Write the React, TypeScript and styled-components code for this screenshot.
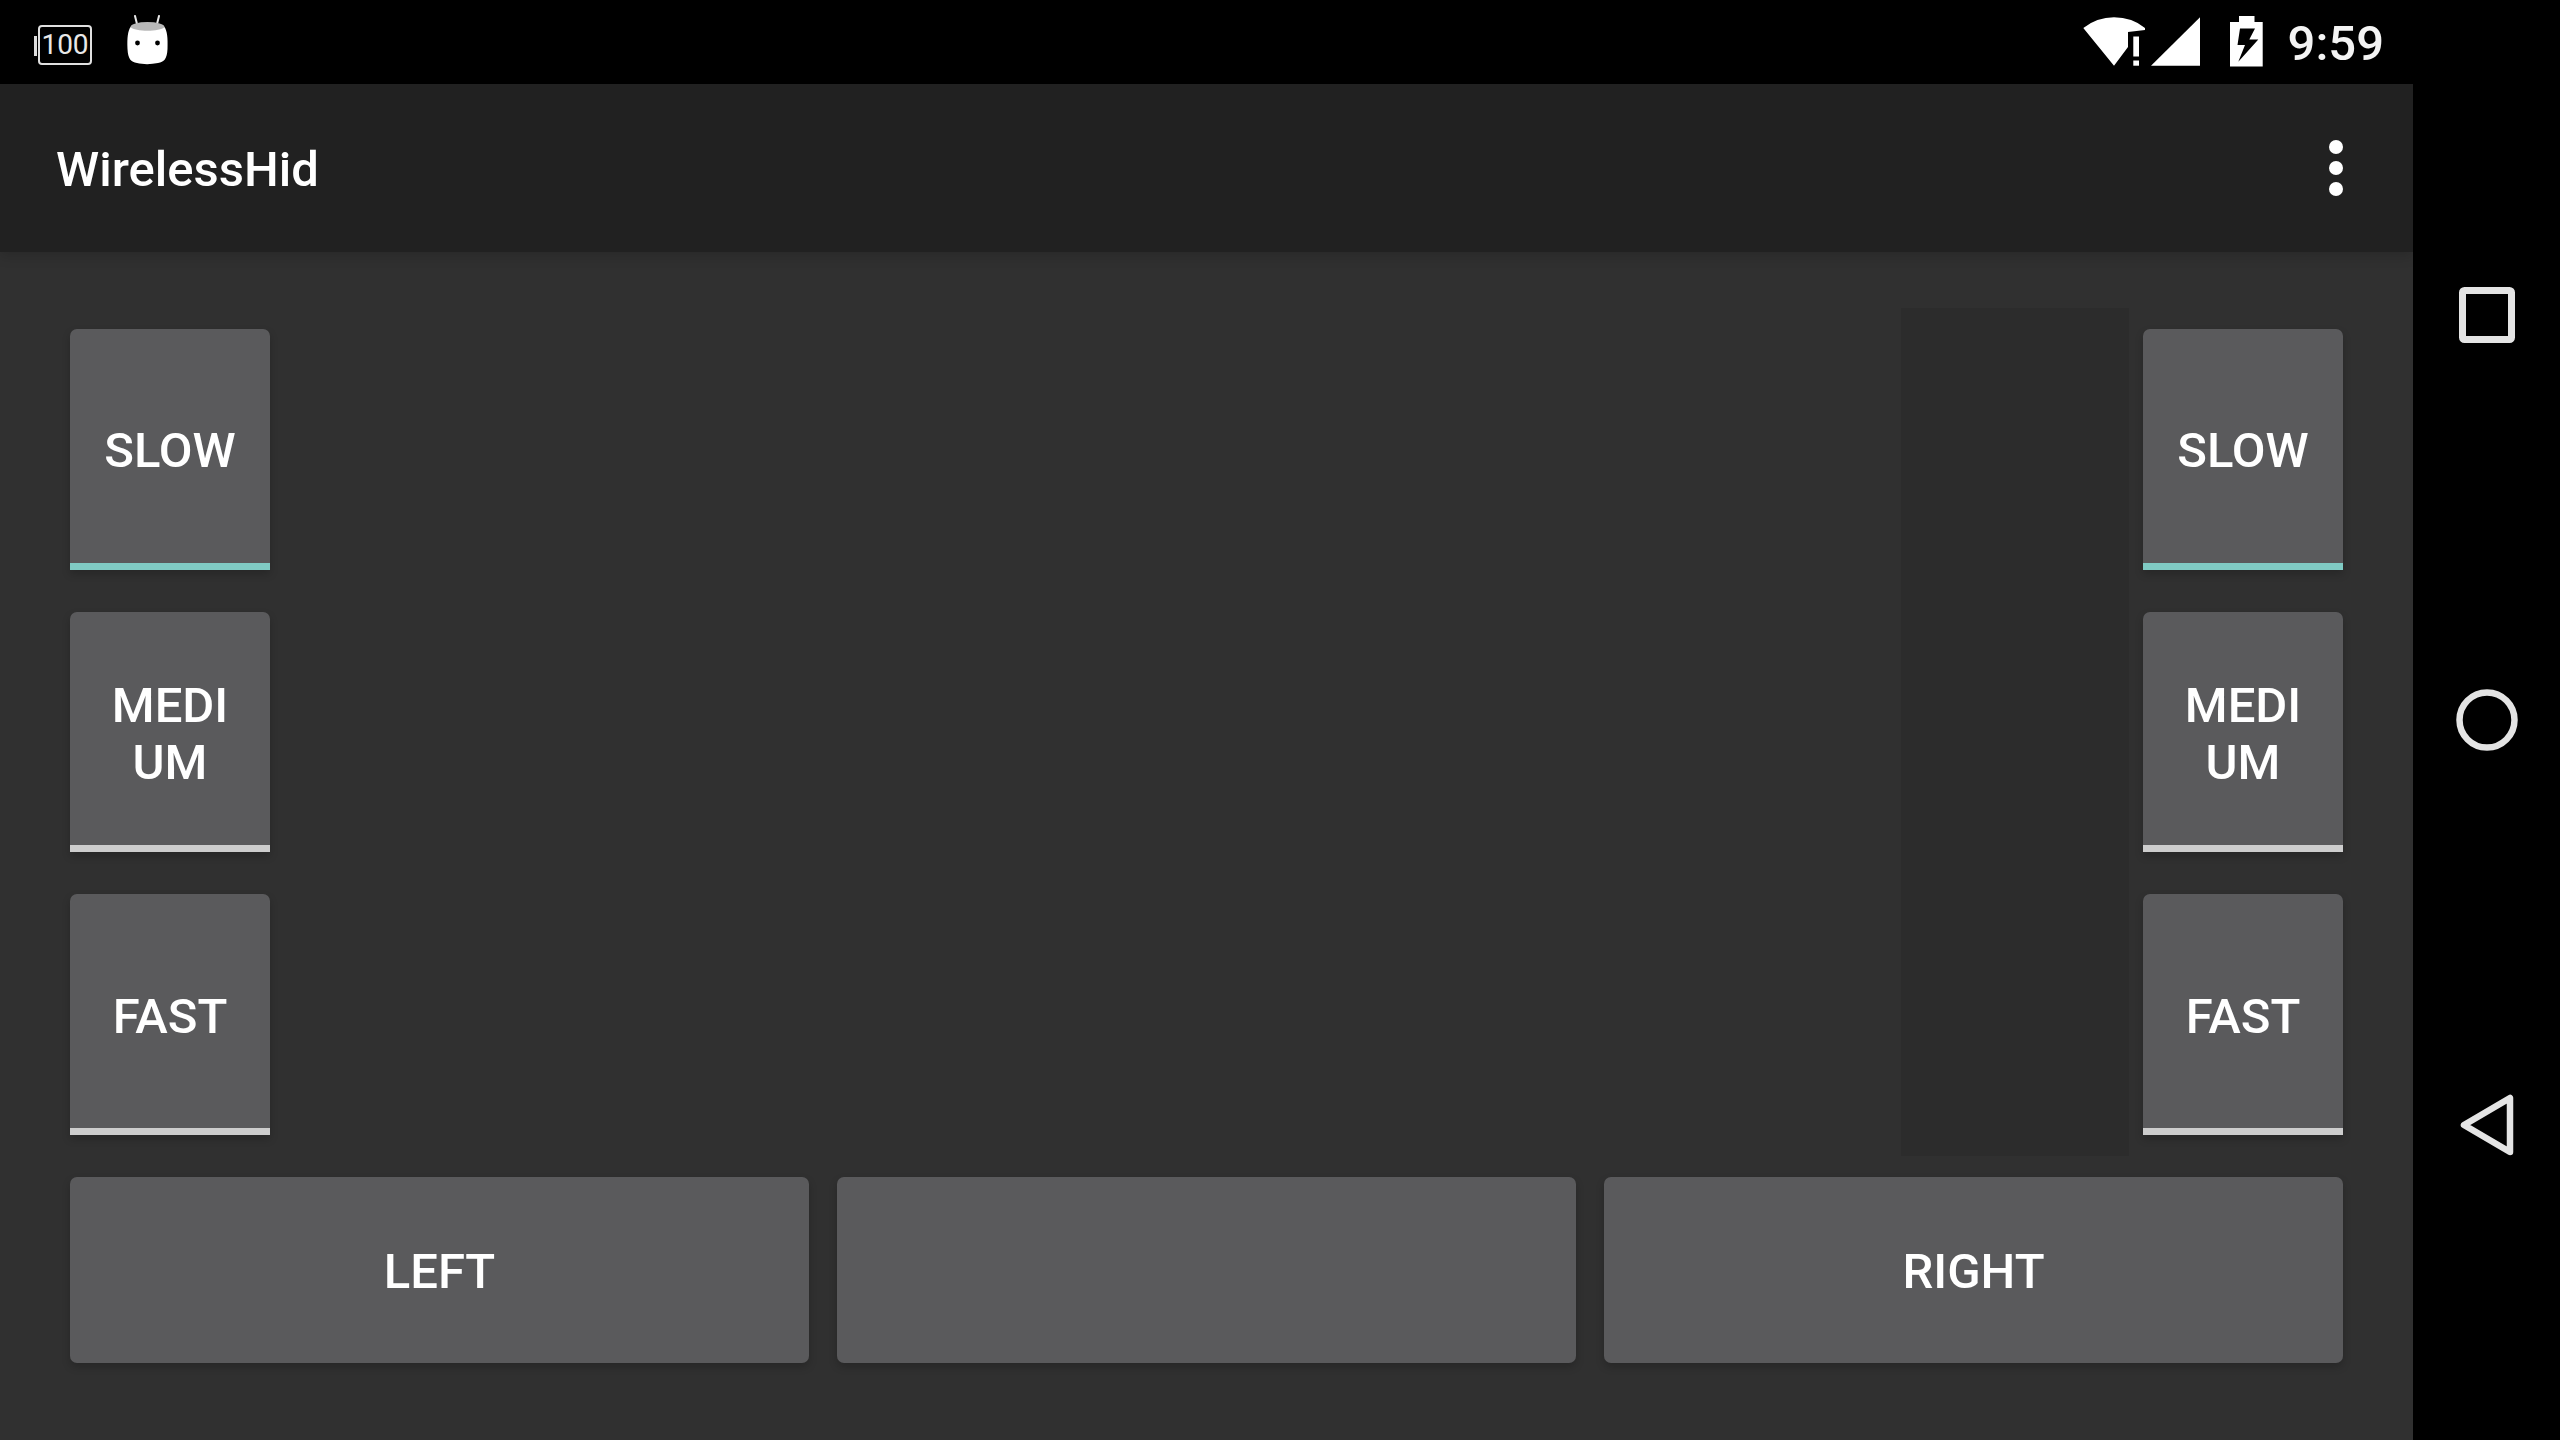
import React from 'react'
import styled, { createGlobalStyle } from 'styled-components'

const GlobalStyle = createGlobalStyle`
  html, body {
    margin: 0;
    background: #000;
  }
  * {
    box-sizing: border-box;
  }
`

export default function App () {
  return (
    <Screen>
      <GlobalStyle />
      <StatusBar>
        <LeftIcons>
          <BatteryHundred>100</BatteryHundred>
          <AndroidHead />
        </LeftIcons>
        <RightIcons>
          <WifiIcon />
          <SignalIcon />
          <ChargingIcon />
          <Clock>9:59</Clock>
        </RightIcons>
      </StatusBar>
      <Body>
        <Main>
          <AppBar>
            <Title>WirelessHid</Title>
            <OverflowIcon />
          </AppBar>
          <Content>
            <TopArea>
              <SpeedColumn>
                <SpeedButton $active>SLOW</SpeedButton>
                <SpeedButton>MEDIUM</SpeedButton>
                <SpeedButton>FAST</SpeedButton>
              </SpeedColumn>
              <Spacer />
              <ScrollPanel />
              <SpeedColumn>
                <SpeedButton $active>SLOW</SpeedButton>
                <SpeedButton>MEDIUM</SpeedButton>
                <SpeedButton>FAST</SpeedButton>
              </SpeedColumn>
            </TopArea>
            <MouseRow>
              <MouseButton>LEFT</MouseButton>
              <MouseButton />
              <MouseButton>RIGHT</MouseButton>
            </MouseRow>
          </Content>
        </Main>
        <NavBar>
          <NavSlot><RecentsIcon /></NavSlot>
          <NavSlot><HomeIcon /></NavSlot>
          <NavSlot><BackIcon /></NavSlot>
        </NavBar>
      </Body>
    </Screen>
  )
}

function AndroidHead () {
  return (
    <svg width='42' height='50' viewBox='0 0 42 50'>
      <path d='M10 9 L8 1 M30 9 L32 1' stroke='#e8e8e8' strokeWidth='2' strokeLinecap='round' />
      <ellipse cx='20.5' cy='12' rx='17' ry='5' fill='#b9b9b9' />
      <path d='M3.5 12 C8 17 33 17 37.5 12 C40 16 41 22 40.5 34 C40 44 37 47 31 48 C24 49.5 16 49.5 10 48 C4 47 1 44 0.5 34 C0 22 1 16 3.5 12 Z' fill='#fff' />
      <circle cx='10.5' cy='28' r='2.4' fill='#000' />
      <circle cx='30.5' cy='28' r='2.4' fill='#000' />
    </svg>
  )
}

function WifiIcon () {
  return (
    <svg width='64' height='50' viewBox='2082 17 64 50'>
      <path d='M2114 65.7 L2083.3 28 Q2097 17.3 2114 17.3 Q2132 17.3 2145 28 L2145 30 L2128 32 L2128 47 Z' fill='#fff' />
      <rect x='2133.3' y='36.5' width='5.7' height='20' fill='#fff' />
      <rect x='2133.3' y='60.5' width='5.7' height='5.2' fill='#fff' />
    </svg>
  )
}

function SignalIcon () {
  return (
    <svg width='50' height='50' viewBox='2151 17 50 50'>
      <path d='M2151 65.7 L2200 65.7 L2200 17.3 Z' fill='#fff' />
    </svg>
  )
}

function ChargingIcon () {
  return (
    <ChargingSvg width='34' height='52' viewBox='2230 16 34 52'>
      <path d='M2239 16 H2254.5 V22 H2262.7 V66.5 H2230 V22 H2239 Z' fill='#fff' />
      <path d='M2240 28.5 H2255 L2249.3 39.5 H2258.3 L2238.3 61.7 L2245 45 H2237.5 Z' fill='#000' />
    </ChargingSvg>
  )
}

function OverflowIcon () {
  return (
    <svg width='14' height='56' viewBox='0 0 14 56'>
      <circle cx='7' cy='7' r='7' fill='#fff' />
      <circle cx='7' cy='28' r='7' fill='#fff' />
      <circle cx='7' cy='49' r='7' fill='#fff' />
    </svg>
  )
}

function RecentsIcon () {
  return (
    <svg width='56' height='56' viewBox='0 0 56 56'>
      <rect x='3.5' y='3.5' width='49' height='49' rx='2' fill='none' stroke='#e4e4e4' strokeWidth='7' />
    </svg>
  )
}

function HomeIcon () {
  return (
    <svg width='62' height='62' viewBox='0 0 62 62'>
      <circle cx='31' cy='31' r='27.5' fill='none' stroke='#e4e4e4' strokeWidth='6.5' />
    </svg>
  )
}

function BackIcon () {
  return (
    <svg width='54' height='62' viewBox='0 0 54 62'>
      <path d='M4 31 L50 4 V58 Z' fill='none' stroke='#e4e4e4' strokeWidth='6.5' strokeLinejoin='round' />
    </svg>
  )
}

const Screen = styled.div`
  width: 2560px;
  height: 1440px;
  display: flex;
  flex-direction: column;
  overflow: hidden;
  background: #000;
  font-family: Roboto, 'Liberation Sans', sans-serif;
  color: #fff;
`

const StatusBar = styled.div`
  height: 84px;
  flex: none;
  display: flex;
  align-items: center;
  justify-content: space-between;
  padding: 0 176px 0 35px;
`

const LeftIcons = styled.div`
  display: flex;
  align-items: flex-end;
  gap: 35px;
  padding-bottom: 5px;
`

const RightIcons = styled.div`
  display: flex;
  align-items: center;
  gap: 5px;
`

const ChargingSvg = styled.svg`
  margin-left: 24px;
`

const BatteryHundred = styled.div`
  position: relative;
  margin-left: 3px;
  width: 54px;
  height: 40px;
  border: 2px solid #e0e0e0;
  border-radius: 4px;
  display: flex;
  align-items: center;
  justify-content: center;
  font-size: 28px;
  font-weight: 400;
  color: #e8e8e8;

  &::before {
    content: '';
    position: absolute;
    left: -6px;
    top: 9px;
    width: 3px;
    height: 20px;
    background: #ddd;
  }
`

const Clock = styled.div`
  margin-left: 19px;
  padding-top: 4px;
  font-size: 49px;
  line-height: 56px;
  font-weight: 500;
  color: #f4f4f4;
`

const Body = styled.div`
  flex: 1;
  display: flex;
  min-height: 0;
`

const Main = styled.div`
  flex: 1;
  display: flex;
  flex-direction: column;
  min-width: 0;
  background: #303030;
`

const AppBar = styled.div`
  position: relative;
  height: 168px;
  flex: none;
  display: flex;
  align-items: center;
  justify-content: space-between;
  padding: 0 70px 0 56px;
  background: #212121;
  box-shadow: 0 4px 12px rgba(0, 0, 0, 0.16);
`

const Title = styled.div`
  padding-top: 3px;
  font-size: 49px;
  font-weight: 500;
`

const Content = styled.div`
  flex: 1;
  display: flex;
  flex-direction: column;
  gap: 21px;
  padding: 56px 70px 77px;
`

const TopArea = styled.div`
  flex: 1;
  display: flex;
  gap: 14px;
  min-height: 0;
`

const SpeedColumn = styled.div`
  width: 200px;
  flex: none;
  display: flex;
  flex-direction: column;
  gap: 42px;
  padding: 21px 0;
`

const Spacer = styled.div`
  flex: 1;
`

const ScrollPanel = styled.div`
  width: 228px;
  flex: none;
  background: #2c2c2c;
`

const ButtonBase = styled.div`
  display: flex;
  align-items: center;
  justify-content: center;
  text-align: center;
  background: #5a5a5c;
  font-size: 49px;
  line-height: 57px;
  font-weight: 500;
  padding-top: 3px;
  box-shadow: 0 4px 8px rgba(0, 0, 0, 0.2);
`

const SpeedButton = styled(ButtonBase)<{ $active?: boolean }>`
  flex: 1;
  padding: 10px 28px 0;
  word-break: break-all;
  border-radius: 7px 7px 0 0;
  border-bottom: 7px solid ${p => (p.$active ? '#80cbc4' : '#cdcdcd')};
`

const MouseRow = styled.div`
  height: 186px;
  flex: none;
  display: flex;
  gap: 28px;
`

const MouseButton = styled(ButtonBase)`
  flex: 1;
  border-radius: 7px;
`

const NavBar = styled.div`
  width: 147px;
  flex: none;
  display: flex;
  flex-direction: column;
  padding-top: 28px;
`

const NavSlot = styled.div`
  height: 405px;
  display: flex;
  align-items: center;
  justify-content: center;
`
